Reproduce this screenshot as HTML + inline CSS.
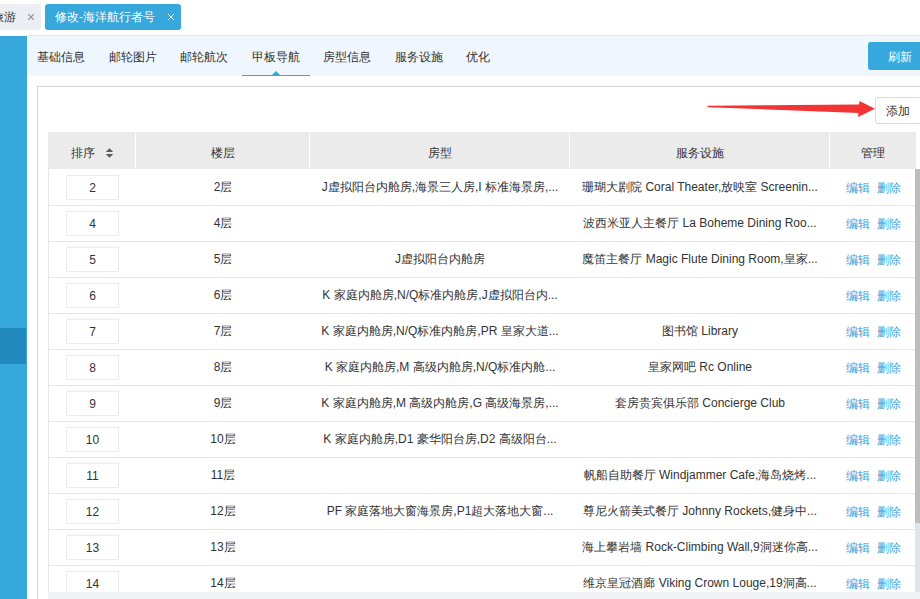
<!DOCTYPE html>
<html><head><meta charset="utf-8">
<style>
*{box-sizing:border-box;margin:0;padding:0}
html,body{width:920px;height:599px;overflow:hidden;background:#fff;font-family:"Liberation Sans",sans-serif;font-size:12px;color:#333}
.abs{position:absolute}
#tab1{left:-20px;top:4px;width:61px;height:26px;background:#ebeef2;border-radius:3px}
#tab1 span{position:absolute;left:0;top:6px;line-height:14px}
#tab1 i{position:absolute;left:28px;top:6px;font-style:normal;color:#888;font-size:12px;line-height:14px}
#tab2{left:45px;top:4px;width:136px;height:26px;background:#36a8dc;border-radius:3px;color:#fff}
#tab2 span{position:absolute;left:10px;top:6px;line-height:14px}
#tab2 i{position:absolute;left:122px;top:6px;font-style:normal;font-size:12px;line-height:14px}
#side{left:0;top:36px;width:27px;height:563px;background:#36a8dc}
#sidedark{left:0;top:328px;width:26px;height:36px;background:#2289bf}
#nav{left:27px;top:35px;width:893px;height:41px;background:#eff6fd;border-top:1px solid #e0e8f1}
.nt{position:absolute;top:15px;line-height:14px}
#uline{left:242px;top:75px;width:68px;height:1px;background:#36a8dc}
#tri{left:272px;top:71px;width:0;height:0;border-left:4px solid transparent;border-right:4px solid transparent;border-bottom:4px solid #36a8dc}
#refresh{left:868px;top:42px;width:60px;height:28px;background:#36a8dc;border-radius:3px;color:#fff}
#refresh span{position:absolute;left:20px;top:8px;line-height:14px}
#panel{left:37px;top:86px;width:900px;height:600px;border:1px solid #d6d6d6}
#add{left:875px;top:97px;width:50px;height:27px;border:1px solid #d9d9d9;border-radius:3px;background:#fff}
#add span{position:absolute;left:10px;top:6px;line-height:14px}
#arrow{left:0;top:0}
#thead{left:48px;top:132px;width:868px;height:37px;background:#ebebeb}
.th{position:absolute;top:0;height:37px;line-height:14px;padding-top:14px;text-align:center;border-left:1px solid #fff}
#body{left:48px;top:169px;width:872px;height:423px;overflow:hidden;border-left:1px solid #e6e6e6}
.row{position:absolute;left:0;width:867px;height:37px;border-bottom:1px solid #e1e6eb}
.c{position:absolute;top:0;height:35px;line-height:14px;padding-top:11px;text-align:center;white-space:nowrap;overflow:hidden}
.inp{position:absolute;left:17px;top:6px;width:53px;height:25px;border:1px solid #ebebeb;text-align:center;line-height:14px;padding-top:5px}
.lk{color:#3b9fdc;position:relative;top:1px}
#sb{left:915px;top:169px;width:5px;height:354px;background:#bdbdbd}
#sbt{left:915px;top:523px;width:5px;height:69px;background:#dfe4ea}
#bot{left:48px;top:592px;width:872px;height:7px;background:#f1f2f6}
</style></head><body>
<div class="abs" id="tab1"><span style="left:12px">旅游</span><svg style="position:absolute;left:48px;top:10px" width="6" height="6" viewBox="0 0 6 6"><path d="M0 0L6 6M6 0L0 6" stroke="#909090" stroke-width="1.2"/></svg></div>
<div class="abs" id="tab2"><span>修改-海洋航行者号</span><svg style="position:absolute;left:123px;top:10px" width="6" height="6" viewBox="0 0 6 6"><path d="M0 0L6 6M6 0L0 6" stroke="#fff" stroke-width="1"/></svg></div>
<div class="abs" id="side"></div>
<div class="abs" id="sidedark"></div>
<div class="abs" id="nav"></div>
<div class="abs nt" style="left:37px;top:50px">基础信息</div>
<div class="abs nt" style="left:109px;top:50px">邮轮图片</div>
<div class="abs nt" style="left:180px;top:50px">邮轮航次</div>
<div class="abs nt" style="left:252px;top:50px">甲板导航</div>
<div class="abs nt" style="left:323px;top:50px">房型信息</div>
<div class="abs nt" style="left:395px;top:50px">服务设施</div>
<div class="abs nt" style="left:466px;top:50px">优化</div>
<div class="abs" id="uline"></div>
<div class="abs" id="tri"></div>
<div class="abs" id="refresh"><span>刷新</span></div>
<div class="abs" id="panel"></div>
<svg class="abs" id="arrow" width="920" height="140"><polygon points="707.5,105.7 859,104.5 859.5,101 875,108.7 858,117 858.5,113 707.5,107.2" fill="#f23434"/></svg>
<div class="abs" id="add"><span>添加</span></div>
<div class="abs" id="thead">
 <div class="th" style="left:0;width:87px;border-left:0"><span style="position:absolute;left:23px;top:14px">排序</span><svg width="9" height="12" style="position:absolute;left:57px;top:15px" viewBox="0 0 9 12"><path d="M0.8 5L4.5 1.2L8.2 5Z M0.8 7L4.5 10.8L8.2 7Z" fill="#5a5a5a"/></svg></div>
 <div class="th" style="left:87px;width:174px">楼层</div>
 <div class="th" style="left:261px;width:260px">房型</div>
 <div class="th" style="left:521px;width:260px">服务设施</div>
 <div class="th" style="left:781px;width:87px">管理</div>
</div>
<div class="abs" id="body">
<div class="row" style="top:0px"><div class="c" style="left:0;width:87px;padding-top:0"><div class="inp">2</div></div><div class="c" style="left:87px;width:174px">2层</div><div class="c" style="left:261px;width:260px">J虚拟阳台内舱房,海景三人房,I 标准海景房,...</div><div class="c" style="left:521px;width:260px">珊瑚大剧院 Coral Theater,放映室 Screenin...</div><div class="c" style="left:781px;width:87px"><span class="lk">编辑</span>&nbsp;&nbsp;<span class="lk">删除</span></div></div>
<div class="row" style="top:36px"><div class="c" style="left:0;width:87px;padding-top:0"><div class="inp">4</div></div><div class="c" style="left:87px;width:174px">4层</div><div class="c" style="left:261px;width:260px"></div><div class="c" style="left:521px;width:260px">波西米亚人主餐厅 La Boheme Dining Roo...</div><div class="c" style="left:781px;width:87px"><span class="lk">编辑</span>&nbsp;&nbsp;<span class="lk">删除</span></div></div>
<div class="row" style="top:72px"><div class="c" style="left:0;width:87px;padding-top:0"><div class="inp">5</div></div><div class="c" style="left:87px;width:174px">5层</div><div class="c" style="left:261px;width:260px">J虚拟阳台内舱房</div><div class="c" style="left:521px;width:260px">魔笛主餐厅 Magic Flute Dining Room,皇家...</div><div class="c" style="left:781px;width:87px"><span class="lk">编辑</span>&nbsp;&nbsp;<span class="lk">删除</span></div></div>
<div class="row" style="top:108px"><div class="c" style="left:0;width:87px;padding-top:0"><div class="inp">6</div></div><div class="c" style="left:87px;width:174px">6层</div><div class="c" style="left:261px;width:260px">K 家庭内舱房,N/Q标准内舱房,J虚拟阳台内...</div><div class="c" style="left:521px;width:260px"></div><div class="c" style="left:781px;width:87px"><span class="lk">编辑</span>&nbsp;&nbsp;<span class="lk">删除</span></div></div>
<div class="row" style="top:144px"><div class="c" style="left:0;width:87px;padding-top:0"><div class="inp">7</div></div><div class="c" style="left:87px;width:174px">7层</div><div class="c" style="left:261px;width:260px">K 家庭内舱房,N/Q标准内舱房,PR 皇家大道...</div><div class="c" style="left:521px;width:260px">图书馆 Library</div><div class="c" style="left:781px;width:87px"><span class="lk">编辑</span>&nbsp;&nbsp;<span class="lk">删除</span></div></div>
<div class="row" style="top:180px"><div class="c" style="left:0;width:87px;padding-top:0"><div class="inp">8</div></div><div class="c" style="left:87px;width:174px">8层</div><div class="c" style="left:261px;width:260px">K 家庭内舱房,M 高级内舱房,N/Q标准内舱...</div><div class="c" style="left:521px;width:260px">皇家网吧 Rc Online</div><div class="c" style="left:781px;width:87px"><span class="lk">编辑</span>&nbsp;&nbsp;<span class="lk">删除</span></div></div>
<div class="row" style="top:216px"><div class="c" style="left:0;width:87px;padding-top:0"><div class="inp">9</div></div><div class="c" style="left:87px;width:174px">9层</div><div class="c" style="left:261px;width:260px">K 家庭内舱房,M 高级内舱房,G 高级海景房,...</div><div class="c" style="left:521px;width:260px">套房贵宾俱乐部 Concierge Club</div><div class="c" style="left:781px;width:87px"><span class="lk">编辑</span>&nbsp;&nbsp;<span class="lk">删除</span></div></div>
<div class="row" style="top:252px"><div class="c" style="left:0;width:87px;padding-top:0"><div class="inp">10</div></div><div class="c" style="left:87px;width:174px">10层</div><div class="c" style="left:261px;width:260px">K 家庭内舱房,D1 豪华阳台房,D2 高级阳台...</div><div class="c" style="left:521px;width:260px"></div><div class="c" style="left:781px;width:87px"><span class="lk">编辑</span>&nbsp;&nbsp;<span class="lk">删除</span></div></div>
<div class="row" style="top:288px"><div class="c" style="left:0;width:87px;padding-top:0"><div class="inp">11</div></div><div class="c" style="left:87px;width:174px">11层</div><div class="c" style="left:261px;width:260px"></div><div class="c" style="left:521px;width:260px">帆船自助餐厅 Windjammer Cafe,海岛烧烤...</div><div class="c" style="left:781px;width:87px"><span class="lk">编辑</span>&nbsp;&nbsp;<span class="lk">删除</span></div></div>
<div class="row" style="top:324px"><div class="c" style="left:0;width:87px;padding-top:0"><div class="inp">12</div></div><div class="c" style="left:87px;width:174px">12层</div><div class="c" style="left:261px;width:260px">PF 家庭落地大窗海景房,P1超大落地大窗...</div><div class="c" style="left:521px;width:260px">尊尼火箭美式餐厅 Johnny Rockets,健身中...</div><div class="c" style="left:781px;width:87px"><span class="lk">编辑</span>&nbsp;&nbsp;<span class="lk">删除</span></div></div>
<div class="row" style="top:360px"><div class="c" style="left:0;width:87px;padding-top:0"><div class="inp">13</div></div><div class="c" style="left:87px;width:174px">13层</div><div class="c" style="left:261px;width:260px"></div><div class="c" style="left:521px;width:260px">海上攀岩墙 Rock-Climbing Wall,9洞迷你高...</div><div class="c" style="left:781px;width:87px"><span class="lk">编辑</span>&nbsp;&nbsp;<span class="lk">删除</span></div></div>
<div class="row" style="top:396px"><div class="c" style="left:0;width:87px;padding-top:0"><div class="inp">14</div></div><div class="c" style="left:87px;width:174px">14层</div><div class="c" style="left:261px;width:260px"></div><div class="c" style="left:521px;width:260px">维京皇冠酒廊 Viking Crown Louge,19洞高...</div><div class="c" style="left:781px;width:87px"><span class="lk">编辑</span>&nbsp;&nbsp;<span class="lk">删除</span></div></div>
</div>
<div class="abs" id="sb"></div>
<div class="abs" id="sbt"></div>
<div class="abs" id="bot"></div>
</body></html>
